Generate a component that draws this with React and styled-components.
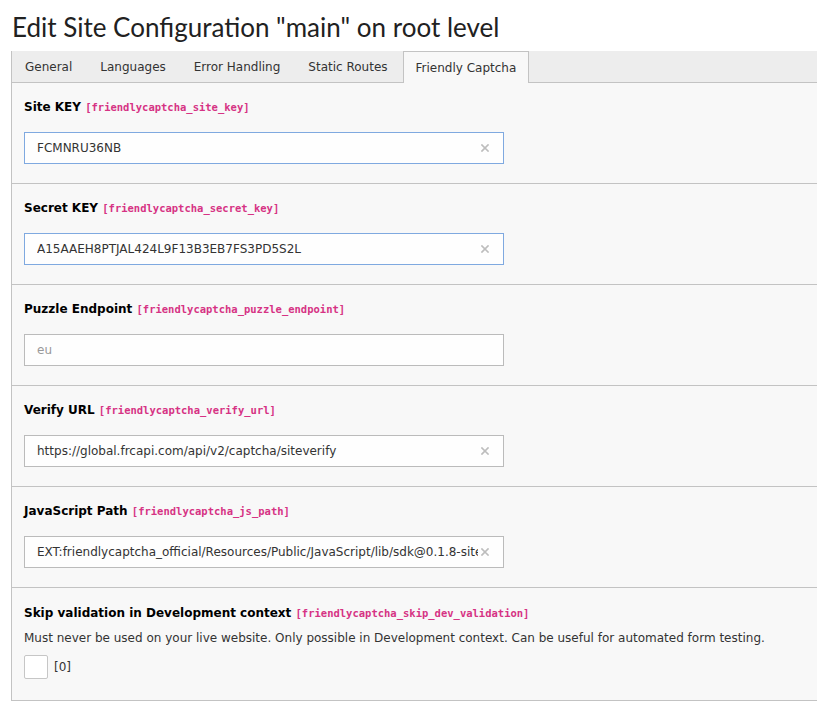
import React from "react";
import styled, { createGlobalStyle } from "styled-components";

const GlobalStyle = createGlobalStyle`
  html, body { margin: 0; padding: 0; background: #fff; }
  body {
    font-family: "DejaVu Sans", Verdana, sans-serif;
    font-size: 12px;
    color: #333;
    overflow: hidden;
  }
`;

const Page = styled.div`
  padding: 0 0 0 11px;
  width: 820px;
`;

const Title = styled.h1`
  margin: 0;
  padding: 10px 0 0 1px;
  height: 51px;
  box-sizing: border-box;
  font-family: Lato, "Open Sans", sans-serif;
  font-weight: 400;
  font-size: 26px;
  line-height: 34px;
  color: #212121;
`;

const Panel = styled.div`
  border-left: 1px solid #c3c3c3;
`;

const TabBar = styled.div`
  display: flex;
  background: #ededed;
  border-bottom: 1px solid #c3c3c3;
  height: 31px;
`;

const Tab = styled.div`
  display: flex;
  align-items: center;
  padding: 0 12px;
  margin-right: 2px;
  border: 1px solid ${(p) => (p.$active ? "#c3c3c3" : "transparent")};
  border-bottom: none;
  background: ${(p) => (p.$active ? "#f8f8f8" : "transparent")};
  height: ${(p) => (p.$active ? "31px" : "30px")};
  margin-bottom: ${(p) => (p.$active ? "-1px" : "0")};
  color: #333;
  white-space: nowrap;
`;

const Section = styled.div`
  background: #f8f8f8;
  border-bottom: 1px solid #c3c3c3;
  padding: 15px 12px 19px;
`;

const Label = styled.div`
  font-weight: 700;
  line-height: 18px;
  color: #000;
  margin-bottom: ${(p) => (p.$tight ? "7px" : "16px")};
`;

const Code = styled.code`
  font-family: "DejaVu Sans Mono", "Liberation Mono", monospace;
  font-size: 10.5px;
  color: #d63384;
  font-weight: 700;
`;

const InputWrap = styled.div`
  position: relative;
  width: 480px;
  height: 32px;
  box-sizing: border-box;
  background: #fefefe;
  border: 1px solid ${(p) => (p.$focus ? "#7fa9e0" : "#bbb")};
  display: flex;
  align-items: center;
  padding: 0 25px 0 12px;
  overflow: hidden;
`;

const InputText = styled.span`
  color: ${(p) => (p.$placeholder ? "#999" : "#333")};
  white-space: nowrap;
  overflow: hidden;
  flex: 1;
`;

const Clear = styled.span`
  position: absolute;
  right: 14px;
  top: 50%;
  width: 8px;
  height: 8px;
  margin-top: -4px;
  display: flex;
  align-items: center;
  justify-content: center;
`;

const Description = styled.div`
  line-height: 18px;
  color: #333;
  margin-bottom: 8px;
`;

const CheckRow = styled.div`
  display: flex;
  align-items: center;
  gap: 6px;
`;

const CheckBox = styled.span`
  width: 24px;
  height: 24px;
  box-sizing: border-box;
  background: #fff;
  border: 1px solid #c6c6c6;
  border-radius: 2px;
`;

const LastSection = styled(Section)`
  padding-top: 16px;
  padding-bottom: 21px;
`;

const ClearIcon = () => (
  <svg width="8" height="8" viewBox="0 0 8 8">
    <path d="M1 1 L7 7 M7 1 L1 7" stroke="#bdbdbd" strokeWidth="1.7" strokeLinecap="square" />
  </svg>
);

const fields = [
  { label: "Site KEY", code: "friendlycaptcha_site_key", value: "FCMNRU36NB", focus: true },
  { label: "Secret KEY", code: "friendlycaptcha_secret_key", value: "A15AAEH8PTJAL424L9F13B3EB7FS3PD5S2L", focus: true },
  { label: "Puzzle Endpoint", code: "friendlycaptcha_puzzle_endpoint", value: "eu", placeholder: true },
  { label: "Verify URL", code: "friendlycaptcha_verify_url", value: "https://global.frcapi.com/api/v2/captcha/siteverify" },
  { label: "JavaScript Path", code: "friendlycaptcha_js_path", value: "EXT:friendlycaptcha_official/Resources/Public/JavaScript/lib/sdk@0.1.8-site.min.js" },
];

const tabs = ["General", "Languages", "Error Handling", "Static Routes", "Friendly Captcha"];

export default function App() {
  return (
    <>
      <GlobalStyle />
      <Page>
        <Title>Edit Site Configuration "main" on root level</Title>
        <Panel>
          <TabBar>
            {tabs.map((t, i) => (
              <Tab key={t} $active={i === tabs.length - 1}>{t}</Tab>
            ))}
          </TabBar>
          {fields.map((f) => (
            <Section key={f.code}>
              <Label>
                {f.label} <Code>[{f.code}]</Code>
              </Label>
              <InputWrap $focus={f.focus}>
                <InputText $placeholder={f.placeholder}>{f.value}</InputText>
                {!f.placeholder && (
                  <Clear>
                    <ClearIcon />
                  </Clear>
                )}
              </InputWrap>
            </Section>
          ))}
          <LastSection>
            <Label $tight>
              Skip validation in Development context <Code>[friendlycaptcha_skip_dev_validation]</Code>
            </Label>
            <Description>
              Must never be used on your live website. Only possible in Development context. Can be useful for automated form testing.
            </Description>
            <CheckRow>
              <CheckBox />
              <span>[0]</span>
            </CheckRow>
          </LastSection>
        </Panel>
      </Page>
    </>
  );
}
